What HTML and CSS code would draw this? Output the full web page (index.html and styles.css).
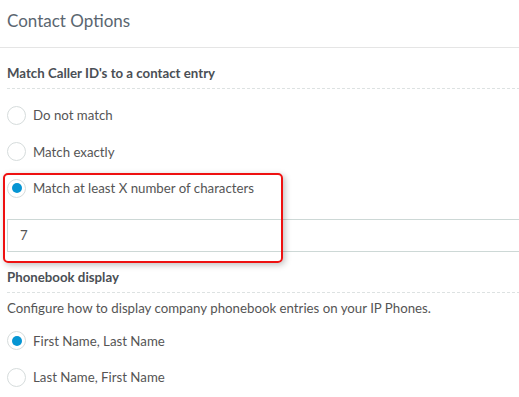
FILE: index.html
```html
<!DOCTYPE html>
<html lang="en">
  <head>
    <meta charset="UTF-8" />
    <title>Contact Options</title>
    <link rel="stylesheet" href="styles.css">
  </head>
  <body>
    <h1 class="page-title">Contact Options</h1>
    <div class="content">
      <h3 class="section-title">Match Caller ID's to a contact entry</h3>
      <div class="options">
        <label class="radio">
          <input type="radio" name="match" />
          <span class="mark"></span>
          Do not match
        </label>
        <label class="radio">
          <input type="radio" name="match" />
          <span class="mark"></span>
          Match exactly
        </label>
        <div class="highlight-wrap">
          <label class="radio">
            <input type="radio" name="match" checked />
            <span class="mark"></span>
            Match at least X number of characters
          </label>
          <input class="text-input" type="text" value="7" />
          <div class="highlight"></div>
        </div>
      </div>

      <h3 class="section-title">Phonebook display</h3>
      <p class="help">Configure how to display company phonebook entries on your IP Phones.</p>
      <div class="options">
        <label class="radio">
          <input type="radio" name="order" checked />
          <span class="mark"></span>
          First Name, Last Name
        </label>
        <label class="radio">
          <input type="radio" name="order" />
          <span class="mark"></span>
          Last Name, First Name
        </label>
      </div>
    </div>
  </body>
</html>
```

FILE: styles.css
```css
* {
  box-sizing: border-box;
  margin: 0;
  padding: 0;
}
body {
  font-family: "Lato", "Open Sans", sans-serif;
  font-size: 13.25px;
  color: #555;
  background: #fff;
  width: 540px;
  overflow: hidden;
}
.page-title {
  font-size: 17px;
  font-weight: normal;
  color: #5a6670;
  padding: 10px 7px 0;
  height: 48px;
  border-bottom: 1px solid #e5e5e5;
}
.content {
  padding: 0 0 0 7px;
}
.section-title {
  font-size: 13.25px;
  font-weight: bold;
  color: #4a4f55;
  padding: 17px 0 7px;
  border-bottom: 1px dashed #dde2e2;
}
.options {
  padding-top: 8px;
}
.help + .options {
  padding-top: 7px;
}
.radio {
  display: flex;
  align-items: center;
  gap: 7px;
  height: 36.5px;
  cursor: pointer;
}
.radio input {
  display: none;
}
.mark {
  width: 19px;
  height: 19px;
  border-radius: 50%;
  border: 1px solid #d6dcdc;
  display: flex;
  align-items: center;
  justify-content: center;
}
.radio input:checked + .mark::after {
  content: "";
  width: 10px;
  height: 10px;
  border-radius: 50%;
  background: #0595d3;
}
.highlight-wrap {
  position: relative;
}
.text-input {
  display: block;
  width: 100%;
  height: 33px;
  margin-top: 12px;
  border: 1px solid #cdd8d6;
  padding: 0 12px;
  font: inherit;
  color: #555;
}
.highlight {
  position: absolute;
  left: -4px;
  top: 3px;
  width: 280px;
  height: 90px;
  border: 2px solid #ee1111;
  border-radius: 5px;
  box-shadow: 2px 2px 6px rgba(0, 0, 0, 0.25);
}
.help {
  padding: 7px 0 0;
}
```
